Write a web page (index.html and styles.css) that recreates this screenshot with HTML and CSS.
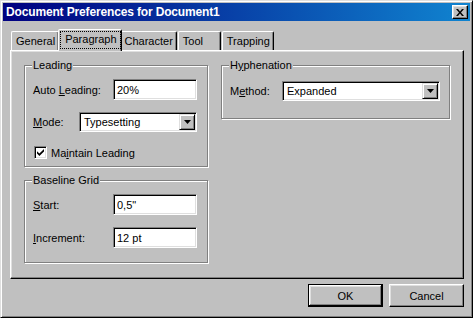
FILE: index.html
```html
<!DOCTYPE html>
<html lang="en">
<head>
  <meta charset="UTF-8">
  <title>Document Preferences for Document1</title>
  <link rel="stylesheet" href="styles.css">
</head>
<body>

  <div class="window">
    <div class="titlebar">
      <span class="title">Document Preferences for Document1</span>
      <button class="close">
        <svg width="8" height="7" viewBox="0 0 8 7"><path d="M0 0h2l2 2.4 2-2.4h2l-3 3.5 3 3.5h-2l-2-2.4-2 2.4h-2l3-3.5z" fill="#000"/></svg>
      </button>
    </div>

    <div class="content">
      <!-- tabs -->
      <div class="tabs">
        <div class="tab">General</div>
        <div class="tab active"><span class="focus">Paragraph</span></div>
        <div class="tab">Character</div>
        <div class="tab tab-tool">Tool</div>
        <div class="tab">Trapping</div>
      </div>

      <div class="panel">
        <div class="col">
          <div class="group leading">
            <span class="legend">Leading</span>
            <div class="row">
              <label>Auto <u>L</u>eading:</label>
              <input class="edit" type="text" value="20%">
            </div>
            <div class="row">
              <label><u>M</u>ode:</label>
              <div class="combo combo-mode">
                <span>Typesetting</span>
                <span class="drop"><svg width="7" height="4" viewBox="0 0 7 4"><path d="M0 0h7l-3.5 4z" fill="#000"/></svg></span>
              </div>
            </div>
            <div class="row check-row">
              <span class="checkbox">
                <svg width="7" height="7" viewBox="0 0 7 7"><path d="M0 2.2l2.4 2.4 4.6-4.6v2.4l-4.6 4.6-2.4-2.4z" fill="#000"/></svg>
              </span>
              <label>Ma<u>i</u>ntain Leading</label>
            </div>
          </div>

          <div class="group baseline">
            <span class="legend">Baseline Grid</span>
            <div class="row">
              <label><u>S</u>tart:</label>
              <input class="edit" type="text" value="0,5&quot;">
            </div>
            <div class="row">
              <label><u>I</u>ncrement:</label>
              <input class="edit" type="text" value="12 pt">
            </div>
          </div>
        </div>

        <div class="col">
          <div class="group hyph">
            <span class="legend">H<u>y</u>phenation</span>
            <div class="row">
              <label>M<u>e</u>thod:</label>
              <div class="combo combo-method">
                <span>Expanded</span>
                <span class="drop"><svg width="7" height="4" viewBox="0 0 7 4"><path d="M0 0h7l-3.5 4z" fill="#000"/></svg></span>
              </div>
            </div>
          </div>
        </div>
      </div>

      <div class="actions">
        <button class="btn default">OK</button>
        <button class="btn">Cancel</button>
      </div>
    </div>
  </div>

</body>
</html>
```

FILE: styles.css
```css
body {
  margin: 0;
  font-family: "Liberation Sans", Arial, sans-serif;
  font-size: 11px;
  color: #000;
  background-color: #c0c0c0;
}

.window {
  width: 473px;
  height: 318px;
  box-sizing: border-box;
  border: 1px solid;
  border-color: #dfdfdf #000 #000 #dfdfdf;
  box-shadow: inset 1px 1px #fff, inset -1px -1px #808080;
  padding: 2px;
  background-color: #c0c0c0;
}

/* title bar */
.titlebar {
  height: 18px;
  display: flex;
  align-items: center;
  justify-content: space-between;
  padding: 0 2px 0 3px;
  background: linear-gradient(90deg, #000080, #1084d0);
}

.title {
  color: #fff;
  font-weight: bold;
  font-size: 12px;
  letter-spacing: -0.15px;
}

.close {
  width: 16px;
  height: 14px;
  padding: 0;
  display: flex;
  align-items: center;
  justify-content: center;
  background-color: #c0c0c0;
  border: 1px solid;
  border-color: #fff #000 #000 #fff;
  box-shadow: inset -1px -1px #808080, inset 1px 1px #dfdfdf;
}

.content {
  padding: 8px 6px 0 7px;
}

/* tabs */
.tabs {
  display: flex;
  align-items: flex-end;
  height: 21px;
  padding-left: 1px;
}

.tab {
  height: 19px;
  box-sizing: border-box;
  padding: 2px 3px 0 4px;
  line-height: 14px;
  border: 1px solid;
  border-bottom: 0;
  border-color: #fff #000 transparent #fff;
  border-radius: 2px 2px 0 0;
  box-shadow: inset -1px 0 #808080;
}

.tab + .tab {
  margin-left: 1px;
}

.tab-tool {
  min-width: 43px;
}

.tab.active {
  height: 22px;
  margin: 0 -2px -1px -1px;
  padding: 2px 1px 0 2px;
  position: relative;
  z-index: 1;
  background-color: #c0c0c0;
}

.tab.active + .tab {
  margin-left: 0;
}

.focus {
  display: inline-block;
  padding: 1px 3px 2px 4px;
  line-height: 13px;
  outline: 1px dotted #000;
}

.panel {
  height: 229px;
  box-sizing: border-box;
  border: 1px solid;
  border-color: #fff #000 #000 #fff;
  box-shadow: inset -1px -1px #808080, inset 1px 1px #dfdfdf;
  padding: 14px 13px 0 13px;
  display: grid;
  grid-template-columns: 184px 229px;
  column-gap: 13px;
  align-items: start;
}

.col {
  display: flex;
  flex-direction: column;
  gap: 13px;
}

/* group boxes */
.group {
  position: relative;
  box-sizing: border-box;
  border: 1px solid #808080;
  box-shadow: inset 1px 1px #fff, 1px 1px #fff;
  padding: 13px 10px 0 8px;
}

.legend {
  position: absolute;
  top: -7px;
  left: 7px;
  padding: 0 1px;
  line-height: 13px;
  background-color: #c0c0c0;
}

.leading {
  height: 102px;
}

.baseline {
  height: 83px;
}

.hyph {
  height: 54px;
  padding: 15px 9px 0 8px;
}

.row {
  display: flex;
  align-items: center;
  justify-content: space-between;
}

.row + .row {
  margin-top: 12px;
}

.check-row {
  justify-content: flex-start;
  gap: 4px;
  padding-left: 1px;
}

.row + .check-row {
  margin-top: 14px;
}

/* fields */
.edit {
  width: 84px;
  height: 21px;
  box-sizing: border-box;
  margin: 0;
  padding: 0 3px;
  font: inherit;
  color: #000;
  background-color: #fff;
  border: 1px solid;
  border-color: #808080 #fff #fff #808080;
  box-shadow: inset 1px 1px #000, inset -1px -1px #dfdfdf;
  outline: none;
}

.combo {
  height: 20px;
  box-sizing: border-box;
  display: flex;
  align-items: center;
  padding: 1px 1px 1px 4px;
  background-color: #fff;
  border: 1px solid;
  border-color: #808080 #fff #fff #808080;
  box-shadow: inset 1px 1px #000, inset -1px -1px #dfdfdf;
}

.combo-mode {
  width: 118px;
}

.combo-method {
  width: 158px;
}

.drop {
  margin-left: auto;
  width: 16px;
  height: 16px;
  box-sizing: border-box;
  display: flex;
  align-items: center;
  justify-content: center;
  background-color: #c0c0c0;
  border: 1px solid;
  border-color: #dfdfdf #000 #000 #dfdfdf;
  box-shadow: inset 1px 1px #fff, inset -1px -1px #808080;
}

.checkbox {
  width: 13px;
  height: 13px;
  box-sizing: border-box;
  display: flex;
  align-items: center;
  justify-content: center;
  background-color: #fff;
  border: 1px solid;
  border-color: #808080 #fff #fff #808080;
  box-shadow: inset 1px 1px #000, inset -1px -1px #dfdfdf;
}

/* buttons */
.actions {
  display: flex;
  justify-content: flex-end;
  gap: 6px;
  margin-top: 5px;
}

.btn {
  width: 75px;
  height: 23px;
  padding: 0;
  font: inherit;
  color: #000;
  background-color: #c0c0c0;
  border: 1px solid;
  border-color: #fff #000 #000 #fff;
  box-shadow: inset -1px -1px #808080, inset 1px 1px #dfdfdf;
}

.btn.default {
  border-color: #000;
  box-shadow: inset -1px -1px #000, inset 1px 1px #fff, inset -2px -2px #808080, inset 2px 2px #dfdfdf;
}
```
